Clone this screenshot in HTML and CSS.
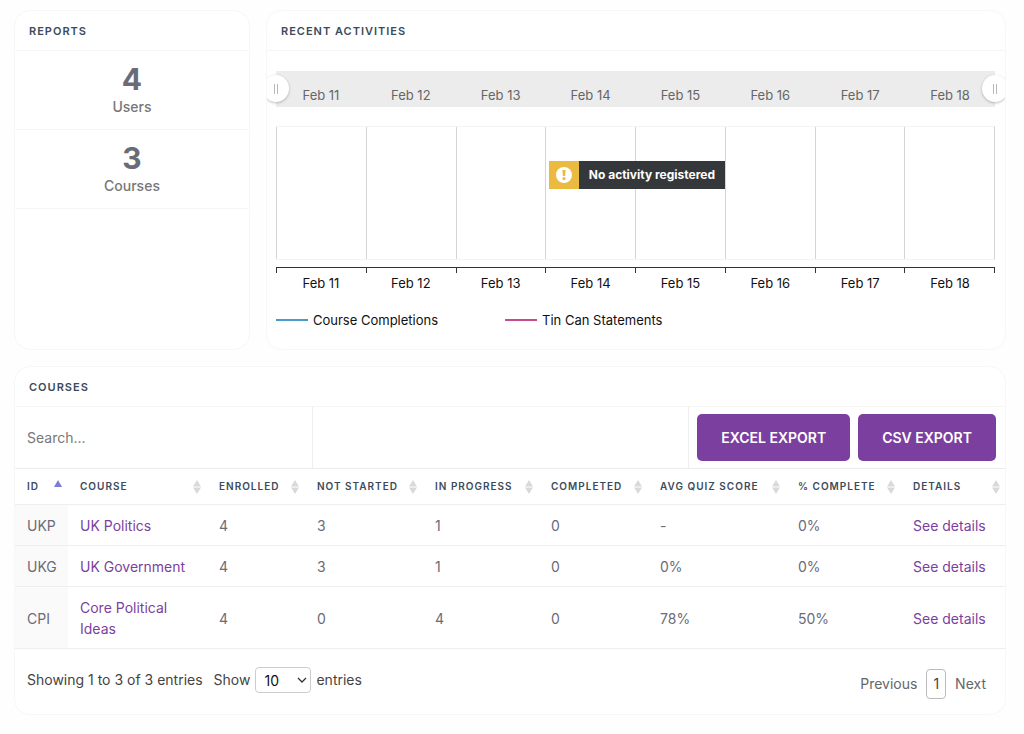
FILE: index.html
```html
<!DOCTYPE html>
<html lang="en">
<head>
<meta charset="utf-8">
<meta name="viewport" content="width=device-width, initial-scale=1">
<title>Reports</title>
<link rel="stylesheet" href="styles.css">
</head>
<body>
<main class="page">
  <div class="overview">
    <section class="card" aria-labelledby="reports-title">
      <h2 class="card-title" id="reports-title">Reports</h2>
      <div class="stat"><strong class="stat-value">4</strong><span class="stat-label">Users</span></div>
      <div class="stat"><strong class="stat-value">3</strong><span class="stat-label">Courses</span></div>
    </section>
    <section class="card" aria-labelledby="activity-title">
      <h2 class="card-title" id="activity-title">Recent Activities</h2>
      <div class="chart">
        <div class="scrubber">
          <div class="days scrubber-days"><span>Feb 11</span><span>Feb 12</span><span>Feb 13</span><span>Feb 14</span><span>Feb 15</span><span>Feb 16</span><span>Feb 17</span><span>Feb 18</span></div>
          <button class="handle handle-start" type="button" aria-label="Range start"><svg width="6" height="10" viewBox="0 0 6 10"><path d="M1.5 0v10M4.5 0v10" stroke="#b8b8b8"/></svg></button>
          <button class="handle handle-end" type="button" aria-label="Range end"><svg width="6" height="10" viewBox="0 0 6 10"><path d="M1.5 0v10M4.5 0v10" stroke="#b8b8b8"/></svg></button>
        </div>
        <div class="plot">
          <i></i><i></i><i></i><i></i><i></i><i></i><i></i><i></i>
          <div class="notice" role="status">
            <span class="notice-icon"><svg width="16" height="16" viewBox="0 0 16 16"><circle cx="8" cy="8" r="8" fill="#fff"/><path d="M6.4 3h3.2L9.200 9H6.800z" fill="#ebba40"/><circle cx="8" cy="11.600" r="1.600" fill="#ebba40"/></svg></span>
            <span class="notice-text">No activity registered</span>
          </div>
        </div>
        <div class="ticks"><i></i><i></i><i></i><i></i><i></i><i></i><i></i><i></i></div>
        <div class="days axis-days"><span>Feb 11</span><span>Feb 12</span><span>Feb 13</span><span>Feb 14</span><span>Feb 15</span><span>Feb 16</span><span>Feb 17</span><span>Feb 18</span></div>
        <div class="legend">
          <span class="legend-item"><i class="swatch swatch-blue"></i>Course Completions</span>
          <span class="legend-item"><i class="swatch swatch-pink"></i>Tin Can Statements</span>
        </div>
      </div>
    </section>
  </div>

  <section class="card" aria-labelledby="courses-title">
    <h2 class="card-title" id="courses-title">Courses</h2>
    <div class="toolbar">
      <input class="search" type="search" placeholder="Search..." aria-label="Search courses">
      <div class="toolbar-space"></div>
      <div class="exports">
        <button class="export" type="button">EXCEL EXPORT</button>
        <button class="export" type="button">CSV EXPORT</button>
      </div>
    </div>
    <table class="courses">
      <colgroup><col class="c-id"><col class="c-course"><col class="c-enrolled"><col class="c-not"><col class="c-progress"><col class="c-completed"><col class="c-quiz"><col class="c-percent"><col class="c-details"></colgroup>
      <thead>
        <tr>
          <th scope="col" aria-sort="ascending"><div class="th">ID<svg class="sort" width="8" height="14" viewBox="0 0 8 14"><path d="M4 0l4 7H0z" fill="#7b7bdc"/></svg></div></th>
          <th scope="col"><div class="th">Course<svg class="sort" width="8" height="14" viewBox="0 0 8 14"><path d="M4 0l4 6.5H0zM4 14l4-6.5H0z" fill="#d9d9d9"/></svg></div></th>
          <th scope="col"><div class="th">Enrolled<svg class="sort" width="8" height="14" viewBox="0 0 8 14"><path d="M4 0l4 6.5H0zM4 14l4-6.5H0z" fill="#d9d9d9"/></svg></div></th>
          <th scope="col"><div class="th">Not started<svg class="sort" width="8" height="14" viewBox="0 0 8 14"><path d="M4 0l4 6.5H0zM4 14l4-6.5H0z" fill="#d9d9d9"/></svg></div></th>
          <th scope="col"><div class="th">In progress<svg class="sort" width="8" height="14" viewBox="0 0 8 14"><path d="M4 0l4 6.5H0zM4 14l4-6.5H0z" fill="#d9d9d9"/></svg></div></th>
          <th scope="col"><div class="th">Completed<svg class="sort" width="8" height="14" viewBox="0 0 8 14"><path d="M4 0l4 6.5H0zM4 14l4-6.5H0z" fill="#d9d9d9"/></svg></div></th>
          <th scope="col"><div class="th">Avg quiz score<svg class="sort" width="8" height="14" viewBox="0 0 8 14"><path d="M4 0l4 6.5H0zM4 14l4-6.5H0z" fill="#d9d9d9"/></svg></div></th>
          <th scope="col"><div class="th">% complete<svg class="sort" width="8" height="14" viewBox="0 0 8 14"><path d="M4 0l4 6.5H0zM4 14l4-6.5H0z" fill="#d9d9d9"/></svg></div></th>
          <th scope="col"><div class="th">Details<svg class="sort" width="8" height="14" viewBox="0 0 8 14"><path d="M4 0l4 6.5H0zM4 14l4-6.5H0z" fill="#d9d9d9"/></svg></div></th>
        </tr>
      </thead>
      <tbody>
        <tr><td>UKP</td><td><a href="#">UK Politics</a></td><td>4</td><td>3</td><td>1</td><td>0</td><td>-</td><td>0%</td><td><a href="#">See details</a></td></tr>
        <tr><td>UKG</td><td><a href="#">UK Government</a></td><td>4</td><td>3</td><td>1</td><td>0</td><td>0%</td><td>0%</td><td><a href="#">See details</a></td></tr>
        <tr><td>CPI</td><td><a href="#">Core Political Ideas</a></td><td>4</td><td>0</td><td>4</td><td>0</td><td>78%</td><td>50%</td><td><a href="#">See details</a></td></tr>
      </tbody>
    </table>
    <div class="footer">
      <span>Showing 1 to 3 of 3 entries</span>
      <label class="length">Show
        <span class="select-wrap"><select class="length-select"><option>10</option><option>25</option><option>50</option></select><svg class="chevron" width="10" height="6" viewBox="0 0 10 6"><path d="M1 1l4 4 4-4" fill="none" stroke="#333" stroke-width="1.3"/></svg></span>
        entries</label>
      <nav class="pager" aria-label="Pagination"><a href="#">Previous</a><a class="current" href="#" aria-current="page">1</a><a href="#">Next</a></nav>
    </div>
  </section>
</main>
</body>
</html>
```
FILE: styles.css
```css
* { box-sizing: border-box; }
body {
  margin: 0;
  background: #fefefe;
  color: #444;
  font: 14px/21px Inter, "Liberation Sans", sans-serif;
}
button, input, select { font: inherit; }
a { color: #7b3fa0; text-decoration: none; }

.page {
  display: grid;
  gap: 16px;
  padding: 10px 18px 18px 14px;
}
.overview {
  display: grid;
  grid-template-columns: 236px 1fr;
  gap: 16px;
}
.card {
  min-width: 0;
  border: 1px solid #f7f7f7;
  border-radius: 16px;
  background: #fff;
  overflow: hidden;
}
.card-title {
  margin: 0;
  padding: 10px 14px 9px;
  border-bottom: 1px solid #f5f5f5;
  color: #3b4b5b;
  font-size: 11px;
  line-height: 20px;
  font-weight: 600;
  letter-spacing: 1px;
  text-transform: uppercase;
}

.stat {
  display: flex;
  flex-direction: column;
  align-items: center;
  padding: 10px 0 12px;
  border-bottom: 1px solid #f5f5f5;
}
.stat-value { color: #6b6b78; font-size: 30px; line-height: 36px; font-weight: 700; }
.stat-label { color: #777; font-weight: 500; line-height: 20px; }

.chart { padding: 20px 10px 20px 9px; font-size: 13px; line-height: 18px; color: #111; }
.scrubber { position: relative; background: #ececec; }
.days { display: grid; grid-template-columns: repeat(8, 1fr); text-align: center; }
.scrubber-days { padding: 15px 0 3px; color: #666; }
.handle {
  position: absolute;
  top: 4px;
  display: grid;
  place-items: center;
  width: 26px;
  height: 27px;
  padding: 0;
  border: 0;
  border-radius: 50%;
  background: #fff;
  box-shadow: 0 1px 3px rgba(0, 0, 0, .25);
}
.handle-start { left: -13px; }
.handle-end { right: -13px; }
.plot {
  position: relative;
  display: grid;
  grid-template-columns: repeat(8, 1fr);
  height: 134px;
  margin-top: 19px;
  border-top: 1px solid #f3f3f3;
  border-bottom: 1px solid #f3f3f3;
  border-right: 1px solid #d5d5d5;
}
.plot i { border-left: 1px solid #d5d5d5; }
.notice {
  position: absolute;
  top: 34px;
  left: 38%;
  display: flex;
  background: #35383b;
  color: #fff;
  font-size: 12px;
  line-height: 28px;
  font-weight: 700;
  white-space: nowrap;
}
.notice-icon { display: grid; place-items: center; width: 30px; background: #ebba40; }
.notice-text { padding: 0 10px; }
.ticks {
  display: grid;
  grid-template-columns: repeat(8, 1fr);
  height: 6px;
  margin-top: 7px;
  border-top: 1px solid #333;
  border-right: 1px solid #333;
}
.ticks i { border-left: 1px solid #333; }
.axis-days { padding-top: 1px; }
.legend { display: flex; gap: 67px; padding-top: 19px; }
.legend-item { display: flex; align-items: center; gap: 5px; }
.swatch { width: 32px; height: 2px; }
.swatch-blue { background: #4a9bc7; }
.swatch-pink { background: #c74a8b; }

.toolbar {
  display: grid;
  grid-template-columns: 299fr 377fr auto;
  border-bottom: 1px solid #ececec;
}
.search {
  min-width: 0;
  padding: 0 12px;
  border: 0;
  border-right: 1px solid #eee;
  background: transparent;
  color: #444;
  appearance: none;
}
.search::placeholder { color: #777; opacity: 1; }
.toolbar-space { border-right: 1px solid #eee; }
.exports { display: flex; gap: 8px; padding: 7px 9px 7px 8px; }
.export {
  padding: 0 24px;
  border: 0;
  border-radius: 5px;
  background: #7b3fa0;
  color: #fff;
  line-height: 47px;
  font-weight: 600;
}

.courses { width: 100%; table-layout: fixed; border-collapse: separate; border-spacing: 0; color: #6b6b78; }
.c-id { width: 53px; }
.c-course { width: 139px; }
.c-enrolled { width: 98px; }
.c-not { width: 118px; }
.c-progress { width: 116px; }
.c-completed { width: 109px; }
.c-quiz { width: 138px; }
.c-percent { width: 115px; }
.c-details { width: 105px; }
.courses th {
  padding: 0 6px 0 12px;
  border-bottom: 1px solid #eee;
  color: #3b4b5b;
  font-size: 10px;
  line-height: 35px;
  font-weight: 600;
  letter-spacing: 1px;
  text-align: left;
  text-transform: uppercase;
  white-space: nowrap;
}
.th { display: flex; align-items: center; justify-content: space-between; }
.sort { flex: none; }
.courses td { padding: 10px 12px 9px; border-bottom: 1px solid #eee; }
.courses td:first-child { padding-right: 0; background: #fafafa; }

.footer { display: flex; align-items: flex-start; gap: 11px; padding: 18px 19px 15px 12px; line-height: 26px; }
.length { display: flex; align-items: center; gap: 5px; }
.select-wrap { position: relative; display: flex; }
.length-select {
  width: 56px;
  height: 26px;
  padding: 0 8px;
  border: 1px solid #ccc;
  border-radius: 4px;
  background: #fff;
  color: #111;
  appearance: none;
}
.chevron { position: absolute; top: 10px; right: 4px; pointer-events: none; }
.pager { display: flex; align-items: center; gap: 9px; margin: 2px 0 0 auto; }
.pager a { color: #666; }
.pager .current { padding: 1px 6px; border: 1px solid #bbb; border-radius: 4px; color: #444; }
```
